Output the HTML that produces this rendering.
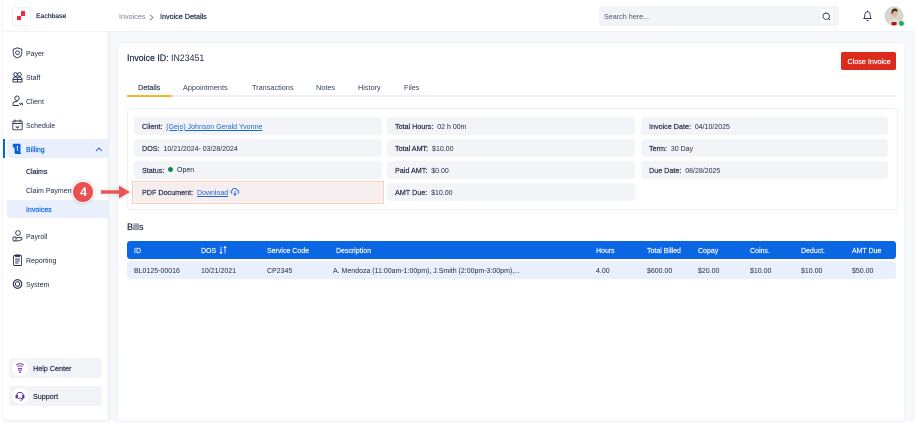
<!DOCTYPE html>
<html><head><meta charset="utf-8"><style>
html,body{margin:0;padding:0;background:#fff}
#p{position:relative;width:918px;height:425px;overflow:hidden;background:#fff;font-family:"Liberation Sans",sans-serif;font-size:7px;color:#1e2a45}
#p div,#p svg{position:absolute}
.t{white-space:nowrap;line-height:12px;height:12px;position:absolute;margin-top:.8px}
.s{-webkit-text-stroke:.2px currentColor}
.r{background:#f2f4f8;border-radius:3px;height:18px}
.l{font-size:7.2px;-webkit-text-stroke:.2px #1e2a45;color:#1e2a45}
.h{color:#fff;-webkit-text-stroke:.15px #fff}
svg{overflow:visible}
.i{fill:none;stroke:#2c3a55;stroke-width:.9;stroke-linecap:round;stroke-linejoin:round}
a{color:#1f66d8;text-decoration:underline}
.tb{color:#38445c;font-size:7.3px}
</style></head><body><div id="p">
<div style="left:108px;top:0;width:807px;height:421px;background:#f6f8fc"></div>
<div style="left:3px;top:0;width:105px;height:420px;background:#fff;border-radius:0 0 0 4px;box-shadow:0 1px 3px rgba(30,50,90,.12)"></div>
<div style="left:3px;top:31px;width:105px;height:1px;background:#f1f3f7"></div>
<div style="left:108px;top:0;width:807px;height:31px;background:#fff;border-bottom:1px solid #eff1f5"></div>

<div style="left:12px;top:7px;width:17px;height:17px;border:1px solid #eef0f3;border-radius:3px;background:#fff"></div>
<div style="left:17px;top:16px;width:4px;height:4px;background:#ee2b3b"></div>
<div style="left:21px;top:11px;width:4px;height:5px;background:#ee2b3b"></div>
<span class="t s" style="left:36px;top:10px;font-size:6.8px">Eachbase</span>

<svg class="i" style="left:12px;top:47px" width="11" height="12" viewBox="0 0 11 12"><path d="M5.500 .8 9.800 2.300V6c0 2.500-2 4.200-4.300 5C3.200 10.200 1.200 8.500 1.200 6V2.300Z"/><circle cx="5.500" cy="5.700" r="1.800"/></svg>
<span class="t" style="left:26px;top:48px">Payer</span>
<svg class="i" style="left:12px;top:71px" width="11" height="12" viewBox="0 0 11 12"><circle cx="3.500" cy="3.500" r="1.800"/><circle cx="7.500" cy="3.500" r="1.800"/><path d="M1 11V7.500L3.500 5.500 5.500 7 7.500 5.500 10 7.500V11ZM1 8.500H10M5.500 7V11"/></svg>
<span class="t" style="left:26px;top:72px">Staff</span>
<svg class="i" style="left:12px;top:95px" width="11" height="12" viewBox="0 0 11 12"><circle cx="5" cy="3.200" r="2.200"/><path d="M1 10.500V9c0-1.500 1.500-2.500 4-2.500M1 10.500H6.500M7.500 8.500l1 1 1.500-1.500 .6 2"/></svg>
<span class="t" style="left:26px;top:96px">Client</span>
<svg class="i" style="left:12px;top:119px" width="11" height="12" viewBox="0 0 11 12"><rect x=".8" y="2" width="9.400" height="8.800" rx="1"/><path d="M.8 4.500H10.200M3 .8V3M8 .8V3M4 7.500 5.500 9 7 7.500"/></svg>
<span class="t" style="left:26px;top:120px">Schedule</span>

<div style="left:7px;top:139px;width:101px;height:19px;background:#e9f0fb;border-radius:3px 0 0 3px"></div>
<div style="left:3px;top:139px;width:1.500px;height:19px;background:#0b62de"></div>
<svg style="left:12px;top:143px" width="11" height="12" viewBox="0 0 11 12"><path d="M1.500 .8H8.500V9.500C8.500 10.500 9.300 11 10.300 11H4C3 11 2.500 10.300 2.500 9.500V4.500H.8V1.800C.8 1.200 1 .8 1.500 .8Z" fill="#0b62de"/><path d="M5.500 3V8M4.500 4H6" stroke="#fff" stroke-width=".8"/></svg>
<span class="t s" style="left:26px;top:144px;color:#0b62de">Billing</span>
<svg style="left:95px;top:147px" width="8" height="5" viewBox="0 0 8 5"><path d="M1 4 4 1 7 4" fill="none" stroke="#2568d0" stroke-width="1"/></svg>
<span class="t s" style="left:26px;top:166px">Claims</span>
<span class="t" style="left:26px;top:185px;width:46px;overflow:hidden">Claim Payments</span>
<div style="left:7px;top:200px;width:101px;height:18px;background:#e9f0fb;border-radius:3px 0 0 3px"></div>
<span class="t s" style="left:26px;top:204px;color:#0b62de">Invoices</span>

<svg class="i" style="left:12px;top:230px" width="11" height="12" viewBox="0 0 11 12"><circle cx="6" cy="3" r="2.300"/><rect x="1" y="7" width="3" height="4" rx="1"/><path d="M4 8 7 7.500c1 0 3-.5 3 1 0 1-2 2.500-6 2.500"/></svg>
<span class="t" style="left:26px;top:231px">Payroll</span>
<svg class="i" style="left:12px;top:254px" width="11" height="12" viewBox="0 0 11 12"><rect x="1.500" y="1.500" width="8" height="10" rx="1"/><path d="M3.500 .8H7.500V2.500H3.500ZM3.500 5H7.500M3.500 7H7.500M3.500 9H6"/></svg>
<span class="t" style="left:26px;top:255px">Reporting</span>
<svg style="left:12px;top:278px" width="11" height="12" viewBox="0 0 11 12"><circle cx="5.500" cy="6" r="4.300" fill="none" stroke="#1e2a45" stroke-width="1.100"/><circle cx="5.500" cy="6" r="2.200" fill="none" stroke="#1e2a45" stroke-width="1"/></svg>
<span class="t" style="left:26px;top:279px">System</span>

<div class="r" style="left:9px;top:358px;width:93px;height:20px"></div>
<div class="r" style="left:9px;top:386px;width:93px;height:20px"></div>
<div style="left:12px;top:360px;width:16px;height:16px;border-radius:50%;background:#fff"></div>
<div style="left:12px;top:388px;width:16px;height:16px;border-radius:50%;background:#fff"></div>
<svg style="left:15px;top:363px" width="10" height="10" viewBox="0 0 10 10" fill="none" stroke="#7a3db8" stroke-width=".9"><path d="M1 2C3.500 .3 6.500 .3 9 2M2.300 3.800C4 2.600 6 2.600 7.700 3.800M3.500 5.500H6.500L5.800 8H4.200ZM4.300 9.500H5.700"/></svg>
<svg style="left:15px;top:391px" width="10" height="10" viewBox="0 0 10 10" fill="none" stroke="#5d2da8" stroke-width=".9"><path d="M1.800 5.500V4.300C1.800 .4 8.200 .4 8.200 4.300V6.500C8.200 8.500 6.500 9.300 5 9.300"/><path d="M3 8C3.500 6.800 6.500 6.800 7 8"/><rect x="1" y="4.500" width="1.400" height="2.300" fill="#5d2da8"/><rect x="7.600" y="4.500" width="1.400" height="2.300" fill="#5d2da8"/></svg>
<span class="t s" style="left:33px;top:362px;font-size:7.2px">Help Center</span>
<span class="t s" style="left:33px;top:390px;font-size:7.2px">Support</span>

<span class="t" style="left:119px;top:10px;color:#7b8496;font-size:7.2px">Invoices</span>
<svg style="left:149px;top:13.500px" width="5" height="7" viewBox="0 0 5 7"><path d="M1 .8 4 3.500 1 6.200" fill="none" stroke="#6b7485" stroke-width=".8"/></svg>
<span class="t s" style="left:160px;top:10px;font-size:7.200px">Invoice Details</span>

<div style="left:599px;top:6px;width:240px;height:20px;border-radius:3px;background:#f2f4f8"></div>
<span class="t" style="left:604px;top:10px;color:#4d566a;font-size:7.200px">Search here...</span>
<div style="left:820px;top:9px;width:13px;height:14px;background:#fff;border-radius:2px;box-shadow:0 0 0 .5px #e4ecfa"></div>
<svg style="left:822px;top:12px" width="9" height="9" viewBox="0 0 9 9" fill="none" stroke="#2c3a55" stroke-width=".9"><circle cx="4.200" cy="4.200" r="3.200"/><path d="M6.500 6.500 8 8"/></svg>
<svg style="left:863px;top:10px" width="9" height="12" viewBox="0 0 9 12" fill="none" stroke="#2c3a55" stroke-width=".9"><path d="M1 8.500C2 7.500 1.800 6 1.800 5 1.800 3 3 1.800 4.500 1.800S7.200 3 7.200 5C7.200 6 7 7.500 8 8.500ZM3.500 10.500H5.500M4.500 .6V1.800"/></svg>
<svg style="left:884px;top:6px" width="20" height="20" viewBox="0 0 20 20"><defs><clipPath id="c"><circle cx="10" cy="10" r="9.500"/></clipPath></defs><g clip-path="url(#c)"><rect width="20" height="20" fill="#d9d5cc"/><path d="M5 20C5 14 7 13 10 13S15 14 15 20Z" fill="#ecdcd0"/><ellipse cx="10.500" cy="7.500" rx="2.800" ry="3.500" fill="#e2b49b"/><path d="M7.500 8C7 4 9 2.500 11 2.500S14 4 13.500 6C12 4.500 10 5 9 6 8.500 7 8.500 8 7.500 8Z" fill="#3c2c26"/><path d="M7.500 16H12.500V20H7.500Z" fill="#a31d24"/></g></svg>
<div style="left:898.500px;top:20.500px;width:5px;height:5px;border-radius:50%;background:#12b55c"></div>

<div style="left:118px;top:43px;width:786px;height:378px;background:#fff;border-radius:4px 4px 0 0;box-shadow:0 0 0 1px #edf2fb"></div>
<span class="t" style="left:127px;top:51px;font-size:8.800px"><span class="s">Invoice ID:</span> IN23451</span>
<div style="left:841px;top:52px;width:55px;height:18px;background:#dc2a1c;border-radius:2px"></div>
<span class="t s" style="left:847.500px;top:55px;color:#fff;font-size:7.200px">Close Invoice</span>

<span class="t tb s" style="left:138px;top:81px">Details</span>
<span class="t tb" style="left:183px;top:81px">Appointments</span>
<span class="t tb" style="left:252px;top:81px">Transactions</span>
<span class="t tb" style="left:316px;top:81px">Notes</span>
<span class="t tb" style="left:358px;top:81px">History</span>
<span class="t tb" style="left:404px;top:81px">Files</span>
<div style="left:127px;top:95px;width:769px;height:1.500px;background:#ebf1fb"></div>
<div style="left:127px;top:95px;width:45px;height:1.500px;background:#fbb331"></div>

<div style="left:127px;top:108px;width:769px;height:100px;border:1px solid #eff1f4;border-radius:4px"></div>
<div class="r" style="left:134px;top:117px;width:248px"></div>
<div class="r" style="left:134px;top:139px;width:248px"></div>
<div class="r" style="left:134px;top:161px;width:248px"></div>
<div style="left:132px;top:181px;width:250px;height:21px;background:#fdf3ef;border:1px solid #f8cfc0"></div>
<div class="r" style="left:134px;top:183px;width:248px;background:#f6edef"></div>
<div class="r" style="left:387px;top:117px;width:248px"></div>
<div class="r" style="left:387px;top:139px;width:248px"></div>
<div class="r" style="left:387px;top:161px;width:248px"></div>
<div class="r" style="left:387px;top:183px;width:248px"></div>
<div class="r" style="left:641px;top:117px;width:247px"></div>
<div class="r" style="left:641px;top:139px;width:247px"></div>
<div class="r" style="left:641px;top:161px;width:247px"></div>

<span class="t" style="left:142px;top:120px"><span class="l">Client:</span>&nbsp; <a>(Gejo) Johnson Gerald Yvonne</a></span>
<span class="t" style="left:142px;top:142px"><span class="l">DOS:</span>&nbsp; 10/21/2024- 03/28/2024</span>
<span class="t" style="left:142px;top:164px"><span class="l">Status:</span></span>
<div style="left:168px;top:167px;width:5px;height:5px;border-radius:50%;background:#0e8a45"></div>
<span class="t" style="left:177px;top:164px">Open</span>
<span class="t" style="left:142px;top:186px"><span class="l">PDF Document:</span>&nbsp; <a>Download</a></span>
<svg style="left:230px;top:187px" width="10" height="9" viewBox="0 0 10 9" fill="none" stroke="#1f66d8" stroke-width=".9"><path d="M2.500 6.200C.5 6.200.5 3.500 2.300 3.300 2.800.8 6.500.8 7 3.300 9 3.300 9.500 6.200 7.500 6.200M5 4V8M3.800 7 5 8.200 6.200 7"/></svg>

<span class="t" style="left:395px;top:120px"><span class="l">Total Hours:</span>&nbsp; 02 h 00m</span>
<span class="t" style="left:395px;top:142px"><span class="l">Total AMT:</span>&nbsp; $10.00</span>
<span class="t" style="left:395px;top:164px"><span class="l">Paid AMT:</span>&nbsp; $0.00</span>
<span class="t" style="left:395px;top:186px"><span class="l">AMT Due:</span>&nbsp; $10.00</span>
<span class="t" style="left:649px;top:120px"><span class="l">Invoice Date:</span>&nbsp; 04/10/2025</span>
<span class="t" style="left:649px;top:142px"><span class="l">Term:</span>&nbsp; 30 Day</span>
<span class="t" style="left:649px;top:164px"><span class="l">Due Date:</span>&nbsp; 08/28/2025</span>

<span class="t s" style="left:127px;top:220px;font-size:9px">Bills</span>

<div style="left:127px;top:241px;width:769px;height:18px;background:#0b66e4;border-radius:3px"></div>
<span class="t h" style="left:134px;top:245px">ID</span>
<span class="t h" style="left:201px;top:245px">DOS</span>
<svg style="left:219px;top:246px" width="8" height="8" viewBox="0 0 8 8" fill="none" stroke="#fff" stroke-width=".8"><path d="M2 .5V7.500M.8 6.200 2 7.500 3.200 6.200M6 7.500V.5M4.800 1.800 6 .5 7.200 1.800"/></svg>
<span class="t h" style="left:267px;top:245px">Service Code</span>
<span class="t h" style="left:336px;top:245px">Description</span>
<span class="t h" style="left:596px;top:245px">Hours</span>
<span class="t h" style="left:647px;top:245px">Total Billed</span>
<span class="t h" style="left:698px;top:245px">Copay</span>
<span class="t h" style="left:750px;top:245px">Coins.</span>
<span class="t h" style="left:801px;top:245px">Deduct.</span>
<span class="t h" style="left:852px;top:245px">AMT Due</span>

<div style="left:127px;top:261px;width:769px;height:18px;background:#e9effb;border-radius:3px"></div>
<span class="t" style="left:134px;top:265px">BL0125-00016</span>
<span class="t" style="left:201px;top:265px">10/21/2021</span>
<span class="t" style="left:267px;top:265px">CP2345</span>
<span class="t" style="left:333px;top:265px">A. Mendoza (11:00am-1:00pm), J.Smith (2:00pm-3:00pm),...</span>
<span class="t" style="left:596px;top:265px">4.00</span>
<span class="t" style="left:647px;top:265px">$600.00</span>
<span class="t" style="left:698px;top:265px">$20.00</span>
<span class="t" style="left:750px;top:265px">$10.00</span>
<span class="t" style="left:801px;top:265px">$10.00</span>
<span class="t" style="left:852px;top:265px">$50.00</span>

<svg style="left:98px;top:183px" width="34" height="18" viewBox="0 0 34 18"><path d="M3 7.300H21V2.500L32 9 21 15.500V10.700H3Z" fill="#eb5454" stroke="#fff" stroke-width="1.600" stroke-linejoin="round" paint-order="stroke" style="filter:drop-shadow(0 0 1px rgba(0,0,0,.2))"/></svg>
<div style="left:72px;top:180.500px;width:20px;height:20px;border:1.500px solid #fff;border-radius:50%;background:#e9504f;box-shadow:0 0 3px rgba(0,0,0,.25)"></div>
<span class="t" style="left:72px;top:184.500px;width:23px;height:14px;line-height:14px;text-align:center;color:#fff;font-weight:bold;font-size:12px;margin:0">4</span>
</div></body></html>
